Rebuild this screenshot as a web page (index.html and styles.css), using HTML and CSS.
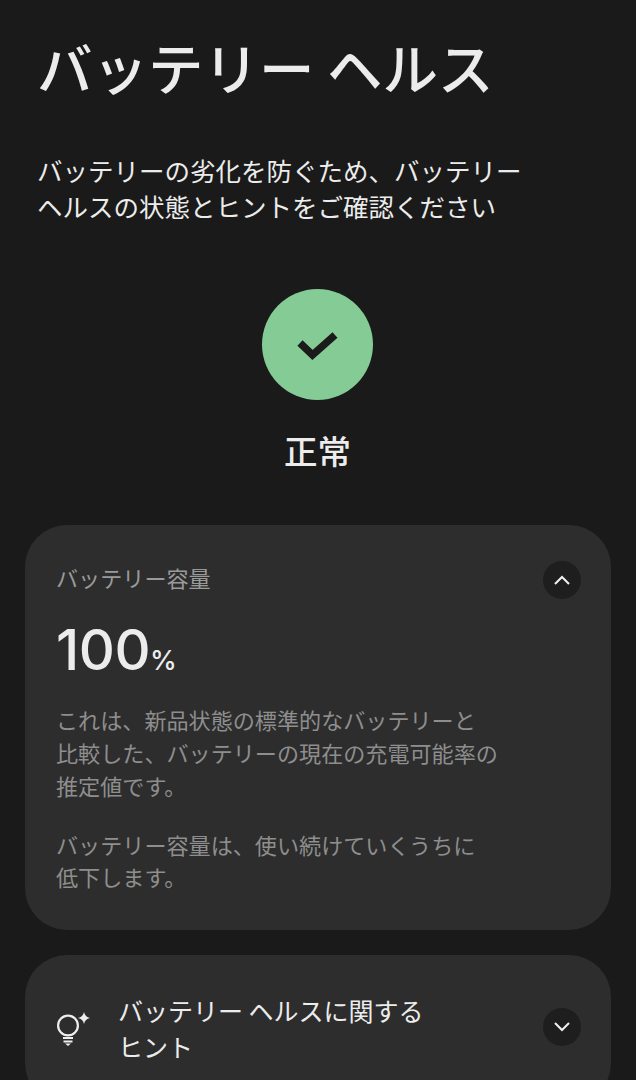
FILE: index.html
```html
<!DOCTYPE html>
<html lang="ja">
<head>
    <meta charset="UTF-8">
    <meta name="viewport" content="width=device-width, initial-scale=1.0">
    <link rel="stylesheet" href="styles.css">
</head>
<body>

    <div class="page">
        <h1 class="title">バッテリー ヘルス</h1>
        <p class="intro">バッテリーの劣化を防ぐため、バッテリー<br>ヘルスの状態とヒントをご確認ください</p>

        <div class="status">
            <div class="status-circle">
                <svg width="44" height="34" viewBox="0 0 44 34">
                    <path d="M4 15 L16.500 27 L39 7" fill="none" stroke="#1b1b1b" stroke-width="7.500"/>
                </svg>
            </div>
            <div class="status-label">正常</div>
        </div>

        <div class="card capacity-card">
            <div class="card-head">
                <span class="card-label">バッテリー容量</span>
                <div class="round-button">
                    <svg width="18" height="12" viewBox="0 0 18 12">
                        <path d="M2 10 L9 3 L16 10" fill="none" stroke="#f0f0f0" stroke-width="2"/>
                    </svg>
                </div>
            </div>
            <div class="capacity-value">100<span class="percent">%</span></div>
            <p class="card-text">これは、新品状態の標準的なバッテリーと<br>比較した、バッテリーの現在の充電可能率の<br>推定値です。</p>
            <p class="card-text card-text-tight">バッテリー容量は、使い続けていくうちに<br>低下します。</p>
        </div>

        <div class="card tips-card">
            <svg class="tips-icon" width="36" height="38" viewBox="0 0 36 38">
                <circle cx="11" cy="15.500" r="9.900" fill="none" stroke="#eeeeee" stroke-width="2.200"/>
                <path d="M6 28 H16 M6.500 31.500 H15.500" stroke="#eeeeee" stroke-width="2"/>
                <path d="M8 33.500 H14 L11 36 Z" fill="#eeeeee"/>
                <path d="M27 2 Q28 7 33 8 Q28 9 27 14 Q26 9 21 8 Q26 7 27 2 Z" fill="#eeeeee"/>
            </svg>
            <div class="tips-text">バッテリー ヘルスに関する<br>ヒント</div>
            <div class="round-button">
                <svg width="18" height="12" viewBox="0 0 18 12">
                    <path d="M2 2 L9 9 L16 2" fill="none" stroke="#f0f0f0" stroke-width="2"/>
                </svg>
            </div>
        </div>
    </div>

</body>
</html>
```

FILE: styles.css
```css
* {
    box-sizing: border-box;
}

html, body {
    height: 100%;
}

body {
    margin: 0;
    padding: 0;
    overflow: hidden;
    background-color: #1a1a1a;
    color: #ececec;
    font-family: "Noto Sans CJK JP", "Noto Sans", sans-serif;
}

.page {
    display: flex;
    flex-direction: column;
    padding: 26px 25px 0;
}

.title {
    margin: 0 0 0 12px;
    font-size: 55.500px;
    line-height: 80px;
    font-weight: 500;
    white-space: nowrap;
}

.intro {
    margin: 46px 0 0 12px;
    font-size: 25.500px;
    line-height: 36px;
    white-space: nowrap;
}

.status {
    display: flex;
    flex-direction: column;
    align-items: center;
    margin-top: 65px;
    padding-right: 1px;
}

.status-circle {
    display: flex;
    justify-content: center;
    align-items: center;
    width: 111px;
    height: 111px;
    border-radius: 50%;
    background-color: #84cb95;
}

.status-label {
    margin-top: 25px;
    font-size: 33.500px;
    line-height: 50px;
    font-weight: 500;
}

.card {
    background-color: #2d2d2d;
    border-radius: 42px;
}

.capacity-card {
    margin-top: 50px;
    height: 405px;
    padding: 36px 30px 0 31px;
}

.card-head {
    display: flex;
    justify-content: space-between;
    align-items: flex-start;
}

.card-label {
    font-size: 22.100px;
    line-height: 32px;
    color: #9a9a9a;
}

.round-button {
    display: flex;
    justify-content: center;
    align-items: center;
    width: 38px;
    height: 38px;
    border-radius: 50%;
    background-color: #1e1e1e;
}

.capacity-value {
    margin-top: 17px;
    font-family: "Inter", sans-serif;
    font-size: 56px;
    line-height: 68px;
    font-weight: 500;
    letter-spacing: -0.500px;
}

.percent {
    font-size: 27px;
    letter-spacing: 0;
}

.card-text {
    margin: 8px 0 0;
    font-size: 22.100px;
    line-height: 33px;
    color: #8e8e8e;
    white-space: nowrap;
}

.card-text-tight {
    margin-top: 27px;
    line-height: 31.500px;
}

.tips-card {
    display: flex;
    align-items: flex-start;
    gap: 26px;
    height: 150px;
    margin-top: 25px;
    padding: 37px 30px 0 32px;
}

.tips-icon {
    flex-shrink: 0;
    margin-top: 18px;
    margin-right: -1px;
}

.tips-text {
    flex-grow: 1;
    font-size: 25px;
    line-height: 36px;
    white-space: nowrap;
}

.tips-card .round-button {
    margin-top: 16px;
}
```
